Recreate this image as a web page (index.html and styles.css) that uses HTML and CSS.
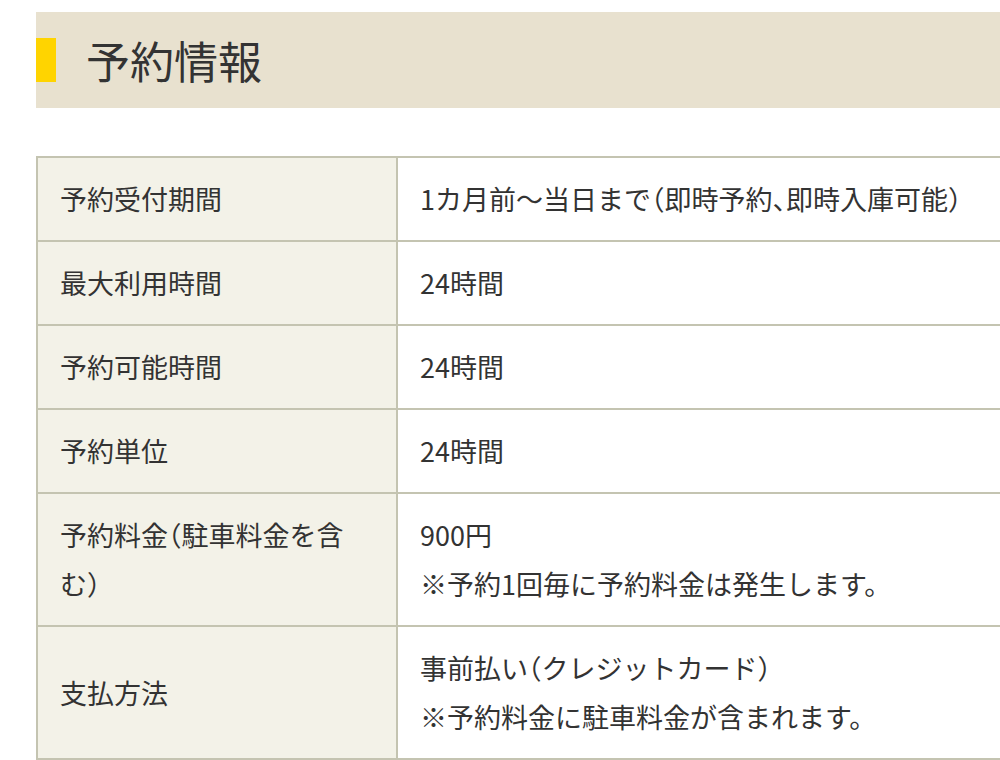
FILE: index.html
```html
<!DOCTYPE html>
<html lang="ja">
<head>
<meta charset="utf-8">
<title>予約情報</title>
<link rel="stylesheet" href="styles.css">
</head>
<body>
<div class="page">
  <h2 class="section-title">予約情報</h2>
  <table class="info-table">
    <colgroup>
      <col class="col-head">
      <col class="col-body">
    </colgroup>
    <tbody>
      <tr>
        <th>予約受付期間</th>
        <td>1カ月前～当日まで（即時予約、即時入庫可能）</td>
      </tr>
      <tr>
        <th>最大利用時間</th>
        <td>24時間</td>
      </tr>
      <tr>
        <th>予約可能時間</th>
        <td>24時間</td>
      </tr>
      <tr>
        <th>予約単位</th>
        <td>24時間</td>
      </tr>
      <tr>
        <th>予約料金（駐車料金を含む）</th>
        <td>900円<br>※予約1回毎に予約料金は発生します。</td>
      </tr>
      <tr>
        <th>支払方法</th>
        <td>事前払い（クレジットカード）<br>※予約料金に駐車料金が含まれます。</td>
      </tr>
      <tr class="row-next">
        <th></th>
        <td></td>
      </tr>
    </tbody>
  </table>
</div>
</body>
</html>
```

FILE: styles.css
```css
html, body {
  margin: 0;
  padding: 0;
  overflow: hidden;
  background: #ffffff;
}

body {
  font-family: "Noto Sans CJK JP", "Noto Sans", sans-serif;
  color: #333333;
}

.page {
  padding: 12px 0 0 36px;
  width: 1040px;
}

.section-title {
  margin: 0;
  height: 96px;
  display: flex;
  align-items: center;
  background: #e8e1cf;
  font-size: 44px;
  font-weight: 400;
  line-height: 1;
  color: #333333;
  font-feature-settings: "halt";
}

.section-title::before {
  content: "";
  display: block;
  width: 20px;
  height: 44px;
  margin-right: 30px;
  background: #ffd400;
}

.info-table {
  margin-top: 48px;
  width: 1040px;
  border-collapse: collapse;
  table-layout: fixed;
  font-size: 27px;
  line-height: 49px;
  font-feature-settings: "halt";
}

.col-head {
  width: 360px;
}

.info-table th,
.info-table td {
  border: 2px solid #c4c4b1;
  padding: 16px 22px 17px 22px;
  text-align: left;
  vertical-align: middle;
  font-weight: 400;
}

.info-table th {
  background: #f3f2e8;
}

.info-table td {
  background: #ffffff;
}

.row-next th,
.row-next td {
  height: 49px;
}
```
